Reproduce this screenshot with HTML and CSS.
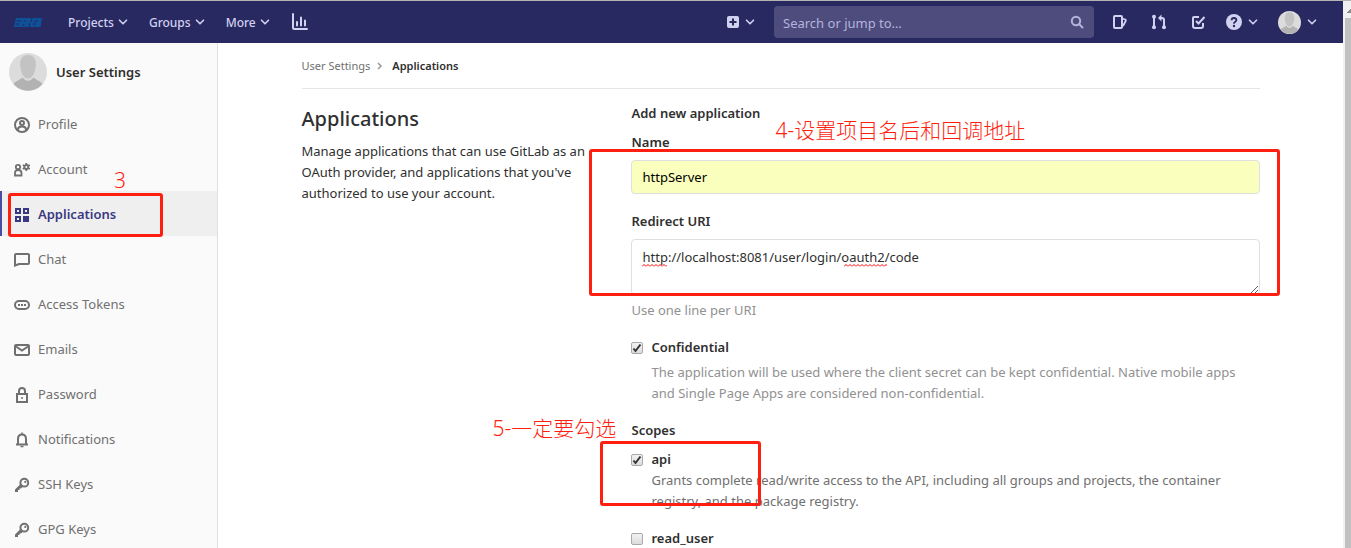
FILE: index.html
```html
<!DOCTYPE html>
<html lang="en">
<head>
<meta charset="utf-8">
<title>Applications · User Settings</title>
<link rel="stylesheet" href="styles.css">
</head>
<body>
<svg class="defs" aria-hidden="true">
  <symbol id="chevron" viewBox="0 0 10 10"><path d="M1.500 3.200 5 6.800l3.500-3.600" fill="none" stroke="currentColor" stroke-width="1.600" stroke-linecap="round" stroke-linejoin="round"/></symbol>
  <symbol id="key" viewBox="0 0 16 16"><circle cx="10.300" cy="5.700" r="3.900" fill="none" stroke="currentColor" stroke-width="2"/><path d="M1 12.500l6-6L9.500 9 7 11.500H5.500V13H4v2H1z" fill="currentColor"/><circle cx="11.300" cy="4.900" r="1.100" fill="currentColor"/></symbol>
  <symbol id="person" viewBox="0 0 38 38"><circle cx="19" cy="19" r="19" fill="#dcdcdc"/><path d="M19 2c5.500 0 8 4 7.800 9.500C26.600 18 24 25.500 19 25.500S11.400 18 11.200 11.500C11 6 13.500 2 19 2z" fill="#c3c3c3"/><path d="M4.500 31c3-3.500 7-4.500 9.200-6.500 1.500 2.300 3.300 3.300 5.300 3.300s3.800-1 5.300-3.300c2.200 2 6.200 3 9.200 6.500A19 19 0 0 1 4.500 31z" fill="#b2b2b2"/></symbol>
</svg>
<div class="window">
<div class="page">
  <header class="navbar">
    <a class="logo" href="#" aria-label="Home"><svg width="28" height="9" viewBox="0 0 28 9"><path d="M2 0h26l-1.500 9H0z" fill="#0d5299"/><path d="M3 3h4M2 6h3M9 8l1-2M10 3h2M15 9l1-4M18 0l-1 4M20 3h4M19 6h3" stroke="#29275f" stroke-width="1" fill="none"/></svg></a>
    <nav class="menu">
      <button>Projects<svg class="chev"><use href="#chevron"/></svg></button>
      <button>Groups<svg class="chev"><use href="#chevron"/></svg></button>
      <button>More<svg class="chev"><use href="#chevron"/></svg></button>
      <button aria-label="Analytics"><svg width="18" height="18" viewBox="0 0 18 18" fill="none" stroke="currentColor" stroke-width="2" stroke-linecap="round"><path d="M2 1v13.500q0 1.500 1.500 1.500H16M6 9v3.500M10 4.500v8M14 7.500v5"/></svg></button>
    </nav>
    <div class="tools">
      <button class="create" aria-label="New"><svg width="12" height="12" viewBox="0 0 12 12"><rect width="12" height="12" rx="2" fill="currentColor"/><path d="M6 2.500v7M2.500 6h7" stroke="#292961" stroke-width="2"/></svg><svg class="chev"><use href="#chevron"/></svg></button>
      <div class="search"><input type="text" placeholder="Search or jump to…" aria-label="Search"><svg width="14" height="14" viewBox="0 0 14 14" fill="none" stroke="currentColor" stroke-width="2"><circle cx="6" cy="6" r="4.200"/><path d="M9 9l3.500 3.500" stroke-linecap="round"/></svg></div>
      <button class="issues" aria-label="Issues"><svg width="16" height="16" viewBox="0 0 16 16" fill="none" stroke="currentColor" stroke-width="2"><rect x="2" y="2" width="8" height="12" rx="1"/><path d="M10 4.500l3.300 1q.8.500.5 1.300L11 12" stroke-width="1.800"/></svg></button>
      <button class="merges" aria-label="Merge requests"><svg width="16" height="16" viewBox="0 0 16 16" fill="none" stroke="currentColor" stroke-width="2"><path d="M3 3v10M13 13V6q0-2-2-2H9"/><path d="M7 4l3.500-3.500v7z" fill="currentColor" stroke="none"/><g fill="currentColor" stroke="none"><circle cx="3" cy="2.800" r="2"/><circle cx="3" cy="13.200" r="2"/><circle cx="13" cy="13.200" r="2"/></g></svg></button>
      <button class="todos" aria-label="To-Do List"><svg width="16" height="16" viewBox="0 0 16 16" fill="none" stroke="currentColor" stroke-width="2"><path d="M9 3H4Q3 3 3 4v8q0 2 2 2h6q2 0 2-2V9"/><path d="M6 7l2.500 2.500L14.500 3"/></svg></button>
      <button class="help" aria-label="Help"><svg width="16" height="16" viewBox="0 0 16 16"><circle cx="8" cy="8" r="8" fill="currentColor"/><path d="M5.600 6.300Q5.700 4 8 4t2.400 2.100Q10.400 7.300 9 8q-1 .5-1 1.700" fill="none" stroke="#292961" stroke-width="1.800"/><circle cx="8" cy="12" r="1.200" fill="#292961"/></svg><svg class="chev"><use href="#chevron"/></svg></button>
      <button class="account" aria-label="Account menu"><svg width="23" height="23"><use href="#person"/></svg><svg class="chev"><use href="#chevron"/></svg></button>
    </div>
  </header>
  <div class="body">
    <aside class="sidebar">
      <a class="context" href="#"><svg width="38" height="38"><use href="#person"/></svg>User Settings</a>
      <a class="item" href="#"><svg viewBox="0 0 16 16" fill="none" stroke="currentColor" stroke-width="2"><circle cx="8" cy="8" r="7"/><circle cx="8" cy="6" r="2"/><path d="M4 13v-1q.5-2.500 4-2.500t4 2.500v1"/></svg>Profile</a>
      <a class="item" href="#"><svg viewBox="0 0 16 16" fill="none" stroke="currentColor" stroke-width="1.800"><circle cx="4" cy="5" r="2.200"/><path d="M1 13.500h6.500V11q0-3-3.300-3T1 11z"/><circle cx="12.300" cy="5" r="2"/><path d="M12.300 1v2M12.300 7v2M8.800 3l1.800 1M14 6l1.800 1M8.800 7l1.800-1M14 4l1.800-1"/></svg>Account</a>
      <a class="item active" href="#" aria-current="page"><svg viewBox="0 0 16 16" fill="none" stroke="currentColor" stroke-width="2"><rect x="2" y="2" width="4" height="4"/><rect x="10" y="2" width="4" height="4"/><rect x="2" y="10" width="4" height="4"/><rect x="10" y="10" width="4" height="4" fill="currentColor"/></svg>Applications</a>
      <a class="item" href="#"><svg viewBox="0 0 16 16" fill="none" stroke="currentColor" stroke-width="2"><path d="M1 13.500V3q0-1 1-1h12q1 0 1 1v8q0 1-1 1H5z"/></svg>Chat</a>
      <a class="item" href="#"><svg viewBox="0 0 16 16" fill="none" stroke="currentColor" stroke-width="2"><rect x="1" y="4" width="14" height="8" rx="4"/><path d="M4 8h2M7 8h2M10 8h2"/></svg>Access Tokens</a>
      <a class="item" href="#"><svg viewBox="0 0 16 16" fill="none" stroke="currentColor" stroke-width="2"><rect x="1" y="3" width="14" height="10" rx="1"/><path d="M2 4.500l6 4 6-4"/></svg>Emails</a>
      <a class="item" href="#"><svg viewBox="0 0 16 16" fill="none" stroke="currentColor" stroke-width="2"><rect x="3" y="7" width="10" height="8"/><path d="M5 7V4q0-3 3-3t3 3v3"/><circle cx="8" cy="11" r="1" fill="currentColor" stroke="none"/></svg>Password</a>
      <a class="item" href="#"><svg viewBox="0 0 16 16" fill="none" stroke="currentColor" stroke-width="2"><path d="M2 12.500h12M4 12V7q0-4.500 4-4.500T12 7v5"/><path d="M8 .500v2M6.500 14.500h3" stroke-width="1.500"/></svg>Notifications</a>
      <a class="item" href="#"><svg><use href="#key"/></svg>SSH Keys</a>
      <a class="item" href="#"><svg><use href="#key"/></svg>GPG Keys</a>
      <span class="note note-three">3</span>
      <span class="frame frame-menu"></span>
    </aside>
    <main class="content">
      <nav class="crumbs"><a href="#">User Settings</a><svg width="8" height="8" viewBox="0 0 8 8"><path d="M2 1l3 3-3 3" fill="none" stroke="#999" stroke-width="1.500"/></svg><strong>Applications</strong></nav>
      <div class="row">
        <section class="intro">
          <h1>Applications</h1>
          <p>Manage applications that can use GitLab as an OAuth provider, and applications that you've authorized to use your account.</p>
        </section>
        <form class="form">
          <h2>Add new application</h2>
          <label for="name">Name</label>
          <input class="field" id="name" type="text" value="httpServer">
          <label for="uri">Redirect URI</label>
          <div class="uri"><textarea class="field" id="uri" spellcheck="false">http://localhost:8081/user/login/oauth2/code</textarea><span class="squiggle squiggle-http"></span><span class="squiggle squiggle-oauth"></span></div>
          <p class="hint">Use one line per URI</p>
          <div class="check">
            <input type="checkbox" id="conf" checked><label for="conf">Confidential</label>
            <p class="hint spaced">The application will be used where the client secret can be kept confidential. Native mobile apps and Single Page Apps are considered non-confidential.</p>
          </div>
          <h2 class="scopes">Scopes</h2>
          <div class="check">
            <input type="checkbox" id="api" checked><label for="api">api</label>
            <p>Grants complete read/write access to the API, including all groups and projects, the container registry, and the package registry.</p>
          </div>
          <div class="check">
            <input type="checkbox" id="read"><label for="read">read_user</label>
          </div>
          <span class="note note-name" lang="zh">4-设置项目名后和回调地址</span>
          <span class="frame frame-fields"></span>
          <span class="note note-scope" lang="zh">5-一定要勾选</span>
          <span class="frame frame-scope"></span>
        </form>
      </div>
    </main>
  </div>
</div>
<div class="scrollbar" aria-hidden="true"><span class="arrow"></span><span class="thumb"></span></div>
</div>
</body>
</html>
```
FILE: styles.css
```css
* { box-sizing: border-box; }
body { margin: 0; font: 13px/21px "Noto Sans", "Noto Sans CJK SC", sans-serif; color: #303030; background: #fff; }
h1, h2, p { margin: 0; }
a { color: inherit; text-decoration: none; }
button { border: 0; padding: 0; background: none; color: inherit; font: inherit; display: flex; align-items: center; cursor: pointer; }
svg { flex: none; display: block; }
.defs { position: absolute; width: 0; height: 0; }
.chev { width: 10px; height: 10px; }
.window { display: flex; height: 100vh; overflow: hidden; border-top: 1px solid #b4b4b4; }
.page { flex: 1; min-width: 0; display: flex; flex-direction: column; }

.navbar { flex: none; height: 42px; display: flex; align-items: center; justify-content: space-between; background: #292961; color: #d1d1f0; padding: 0 26px 0 14px; }
.logo { margin-right: 26px; }
.menu { flex: 1; display: flex; gap: 21px; font-size: 12px; font-weight: 500; }
.menu button { gap: 4px; }
.tools { display: flex; align-items: center; }
.tools button { gap: 6px; }
.search { position: relative; width: 320px; margin: 0 18px 0 19px; }
.search input { display: block; width: 100%; height: 32px; border: 0; border-radius: 4px; padding: 2px 32px 0 9px; background: #4d4c7d; color: #d1d1f0; font: 13px/20px "Noto Sans", sans-serif; }
.search input::placeholder { color: #b4b4dc; opacity: 1; }
.search svg { position: absolute; right: 10px; top: 9px; color: #b4b4dc; }
.merges, .todos { margin-left: 23px; }
.help { margin-left: 20px; }
.account { margin-left: 20px; }

.body { flex: 1; min-height: 0; display: flex; overflow: hidden; }
.sidebar { position: relative; flex: none; width: 218px; background: #fafafa; border-right: 1px solid #e1e1e1; color: #707070; }
.context { display: flex; align-items: center; gap: 9px; height: 58px; padding-left: 9px; color: #2e2e2e; font-weight: 600; }
.item { display: flex; align-items: center; gap: 8px; height: 45px; padding: 2px 0 0 14px; }
.item svg { width: 16px; height: 16px; }
.item.active { background: #efefef; color: #393982; font-weight: 600; box-shadow: inset 2px 0 #4b4ba3; }

.content { flex: 1; min-width: 0; max-width: 990px; margin: 0 auto; padding: 0 16px; }
.crumbs { display: flex; align-items: center; height: 46px; border-bottom: 1px solid #e5e5e5; font-size: 11px; color: #707070; }
.crumbs svg { margin: 0 8px 0 6px; }
.crumbs strong { font-weight: 600; color: #2e2e2e; }
.row { display: flex; margin: 0 -16px; }
.intro { width: 33.333%; padding: 16px 12px 0 16px; }
.intro h1 { font-size: 20px; line-height: 28px; font-weight: 500; margin-bottom: 8px; }
.form { position: relative; flex: 1; padding: 14px 16px 0; }
.form h2, .form label { font-size: 13px; font-weight: 600; line-height: 21px; }
.form > label { display: block; margin: 8px 0 7px; }
.field { display: block; width: 100%; border: 1px solid #dfdfdf; border-radius: 4px; padding: 7px 10px; font: 13px/20px "Noto Sans", sans-serif; color: #303030; }
input.field { height: 34px; background: #faffbd; color: #000; margin-bottom: 17px; }
.uri { position: relative; }
textarea.field { height: 56px; resize: vertical; overflow: hidden; }
.squiggle { position: absolute; top: 25px; height: 3px; background: url("data:image/svg+xml,%3Csvg xmlns='http://www.w3.org/2000/svg' width='4' height='3'%3E%3Cpath d='M0 2.500L2 .5 4 2.500' fill='none' stroke='red'/%3E%3C/svg%3E") repeat-x; }
.squiggle-http { left: 11px; width: 25px; }
.squiggle-oauth { left: 213px; width: 43px; }
.hint { color: #919191; }
.uri + .hint { margin: 5px 0 16px; }
.check { display: grid; grid-template-columns: 12px 1fr; column-gap: 8px; align-items: center; margin-bottom: 16px; color: #707070; }
.check label { color: #303030; }
.check p { grid-column: 2; }
.check .spaced { margin-top: 4px; }
.check input { appearance: none; width: 12px; height: 12px; margin: 0; border: 1px solid #a9a9a9; border-radius: 2px; background: linear-gradient(#f2f2f2, #dcdcdc); }
.check input:checked { background: url("data:image/svg+xml,%3Csvg xmlns='http://www.w3.org/2000/svg' viewBox='0 0 10 10'%3E%3Cpath d='M1.500 5.500l2 2.500 5-6.500' fill='none' stroke='%23333' stroke-width='2'/%3E%3C/svg%3E"), linear-gradient(#f2f2f2, #dcdcdc); }
.scopes { margin: 0 0 8px; }

.note { position: absolute; color: #ff1f10; font: 300 21px/30px "Noto Sans", "Noto Sans CJK SC", sans-serif; white-space: nowrap; }
.frame { position: absolute; border: 3px solid #ff1f10; border-radius: 3px; pointer-events: none; }
.note-three { left: 114px; top: 122px; }
.frame-menu { left: 8px; top: 150px; width: 155px; height: 44px; }
.note-name { left: 160px; top: 26px; }
.frame-fields { left: -26px; right: -4px; top: 60px; height: 147px; }
.note-scope { left: -123px; top: 324px; }
.frame-scope { left: -15px; top: 352px; width: 161px; height: 65px; }

.scrollbar { flex: none; width: 8px; display: flex; flex-direction: column; align-items: flex-end; background: #f1f1f1; }
.arrow { width: 4px; height: 17px; background: linear-gradient(135deg, transparent 50%, #8a8a8a 50%) 0 8px / 4px 4px no-repeat; }
.thumb { flex: 1; width: 6px; background: #c1c1c1; }
```
